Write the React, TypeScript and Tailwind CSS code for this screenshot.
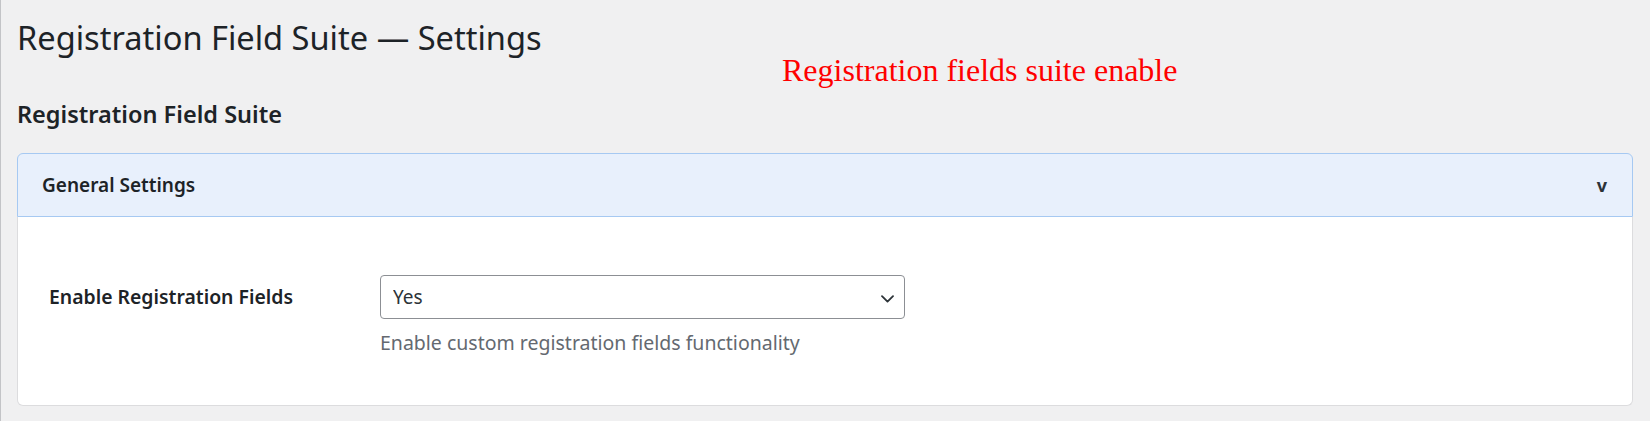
import { useState } from "react"

const sans = "font-['Noto_Sans','Open_Sans',sans-serif]"

function SelectField() {
  const [value, setValue] = useState("yes")
  return (
    <div className="relative w-[525px]">
      <select
        value={value}
        onChange={(e) => setValue(e.target.value)}
        className="h-[44px] w-full appearance-none rounded-[4px] border border-[#8c8f94] bg-white pl-[12px] pr-[36px] text-[19px] text-[#2c3338] outline-none"
      >
        <option value="yes">Yes</option>
        <option value="no">No</option>
      </select>
      <svg
        className="pointer-events-none absolute right-[11px] top-[20px]"
        width="13"
        height="8"
        viewBox="0 0 13 8"
        fill="none"
      >
        <path d="M1 1.2 6.5 6.6 12 1.2" stroke="#2c3338" strokeWidth="1.8" strokeLinecap="round" strokeLinejoin="round" />
      </svg>
    </div>
  )
}

export default function App() {
  return (
    <div className={`relative min-h-screen border-l border-[#c3c4c7] bg-[#f0f0f1] pl-[16px] pr-[17px] pb-[16px] ${sans}`}>
      <h1 className="pt-[18px] text-[32.6px] font-normal leading-[40px] text-[#1d2327]">
        Registration Field Suite — Settings
      </h1>

      <span className="absolute left-[781px] top-[53px] font-['Liberation_Serif',serif] text-[32px] leading-[34px] text-[#ff0000]">
        Registration fields suite enable
      </span>

      <h2 className="mt-[41px] text-[23.5px] font-semibold leading-[30px] text-[#1d2327]">
        Registration Field Suite
      </h2>

      <div className="mt-[24px]">
        <div className="flex h-[64px] items-center justify-between rounded-t-[6px] border border-[#a6c9f2] bg-[#e8f0fc] pl-[24px] pr-[25px]">
          <h3 className="text-[19px] font-semibold text-[#1d2327]">General Settings</h3>
          <span className="text-[18px] font-bold leading-none text-[#2c3338]">v</span>
        </div>

        <div className="rounded-b-[6px] border-x border-b border-[#dcdcde] bg-white pt-[58px] pb-[49px] pl-[31px]">
          <div className="flex">
            <label className="flex h-[44px] w-[331px] shrink-0 items-center text-[19.4px] font-semibold text-[#1d2327]">
              Enable Registration Fields
            </label>
            <div className="flex flex-col">
              <SelectField />
              <p className="mt-[10px] text-[19.5px] leading-[27px] text-[#646970]">
                Enable custom registration fields functionality
              </p>
            </div>
          </div>
        </div>
      </div>
    </div>
  )
}
